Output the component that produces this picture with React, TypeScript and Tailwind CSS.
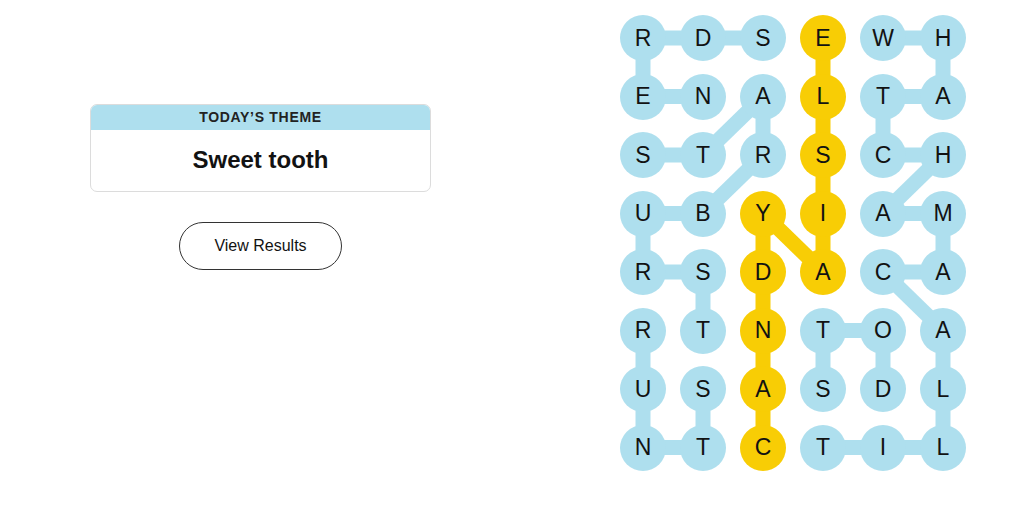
const BOARD = [
  "RDSEWH",
  "ENALTA",
  "STRSCH",
  "UBYIAM",
  "RSDACA",
  "RTNTOA",
  "USASDL",
  "NTCTIL",
];

type Cell = [number, number];

const BLUE_LINKS: [Cell, Cell][] = [
  // NERDS
  [[1, 1], [0, 1]],
  [[0, 1], [0, 0]],
  [[0, 0], [1, 0]],
  [[1, 0], [2, 0]],
  // STARBURST
  [[0, 2], [1, 2]],
  [[1, 2], [2, 1]],
  [[2, 1], [2, 2]],
  [[2, 2], [1, 3]],
  [[1, 3], [0, 3]],
  [[0, 3], [0, 4]],
  [[0, 4], [1, 4]],
  [[1, 4], [1, 5]],
  // RUNTS
  [[0, 5], [0, 6]],
  [[0, 6], [0, 7]],
  [[0, 7], [1, 7]],
  [[1, 7], [1, 6]],
  // WHATCHAMACALLIT
  [[4, 0], [5, 0]],
  [[5, 0], [5, 1]],
  [[5, 1], [4, 1]],
  [[4, 1], [4, 2]],
  [[4, 2], [5, 2]],
  [[5, 2], [4, 3]],
  [[4, 3], [5, 3]],
  [[5, 3], [5, 4]],
  [[5, 4], [4, 4]],
  [[4, 4], [5, 5]],
  [[5, 5], [5, 6]],
  [[5, 6], [5, 7]],
  [[5, 7], [4, 7]],
  [[4, 7], [3, 7]],
  // DOTS
  [[4, 6], [4, 5]],
  [[4, 5], [3, 5]],
  [[3, 5], [3, 6]],
];

// CANDY AISLE
const SPANGRAM: Cell[] = [
  [2, 7],
  [2, 6],
  [2, 5],
  [2, 4],
  [2, 3],
  [3, 4],
  [3, 3],
  [3, 2],
  [3, 1],
  [3, 0],
];

const COL_STEP = 60;
const ROW_STEP = 58.5;
const R = 23;

function center([c, r]: Cell) {
  return { x: R + c * COL_STEP, y: R + r * ROW_STEP };
}

function isSpangram(c: number, r: number) {
  return SPANGRAM.some(([sc, sr]) => sc === c && sr === r);
}

function Board() {
  const width = R * 2 + COL_STEP * 5;
  const height = R * 2 + ROW_STEP * 7;

  return (
    <div className="relative" style={{ width, height }}>
      <svg className="absolute inset-0" width={width} height={height}>
        {BLUE_LINKS.map(([a, b], i) => {
          const p = center(a);
          const q = center(b);
          return <line key={i} x1={p.x} y1={p.y} x2={q.x} y2={q.y} stroke="#aedfee" strokeWidth={15} />;
        })}
        {SPANGRAM.slice(1).map((cell, i) => {
          const p = center(SPANGRAM[i]);
          const q = center(cell);
          return <line key={i} x1={p.x} y1={p.y} x2={q.x} y2={q.y} stroke="#f8cd05" strokeWidth={15} />;
        })}
      </svg>
      <div className="relative grid grid-cols-[repeat(6,46px)] gap-x-[14px] gap-y-[12.5px]">
        {BOARD.map((row, r) =>
          row.split("").map((letter, c) => (
            <div
              key={`${r}-${c}`}
              className={`flex h-[46px] w-[46px] items-center justify-center rounded-full text-[23px] text-[#121212] ${
                isSpangram(c, r) ? "bg-[#f8cd05]" : "bg-[#aedfee]"
              }`}
            >
              {letter}
            </div>
          )),
        )}
      </div>
    </div>
  );
}

export default function App() {
  return (
    <div className="flex h-[523px] w-[1024px] bg-white font-['Liberation_Sans',Arial,sans-serif] text-[#121212]">
      <div className="ml-[90px] flex w-[341px] flex-col items-center pt-[104px]">
        <div className="w-full overflow-hidden rounded-[7px] border border-[#dcdcdc]">
          <div className="bg-[#aedfee] py-[4px] text-center text-[14px] font-bold leading-[17px] tracking-[0.05em] text-[#222]">
            TODAY’S THEME
          </div>
          <div className="pb-[17px] pt-[15px] text-center text-[24px] font-bold leading-[29px]">Sweet tooth</div>
        </div>
        <button
          type="button"
          className="mt-[30px] h-[48px] w-[163px] rounded-full border border-[#333] text-[16px] text-[#121212]"
        >
          View Results
        </button>
      </div>
      <div className="ml-[189px] pt-[15px]">
        <Board />
      </div>
    </div>
  );
}
